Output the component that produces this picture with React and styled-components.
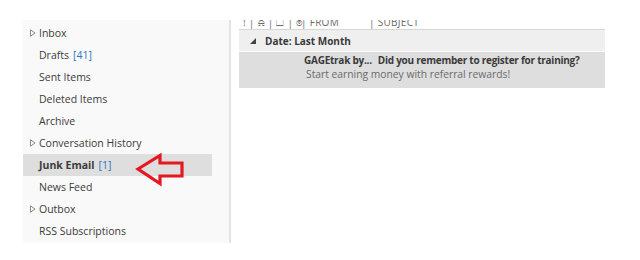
import React from 'react';
import styled, { createGlobalStyle } from 'styled-components';

const Global = createGlobalStyle`
  html, body {
    margin: 0;
    background: #ffffff;
  }
  body {
    font-family: 'Open Sans', 'Noto Sans', sans-serif;
    color: #333;
  }
`;

const Page = styled.div`
  position: relative;
  display: flex;
  align-items: flex-start;
  width: 640px;
  height: 260px;
  padding: 20px 0 0 23px;
  box-sizing: border-box;
  overflow: hidden;
`;

/* Folder pane */
const FolderPane = styled.div`
  width: 208px;
  padding: 2px 0 0;
  height: 223px;
  box-sizing: border-box;
  background: #f9f9f9;
  border-right: 2px solid #e4e4e4;
`;

const FolderRow = styled.div`
  display: flex;
  align-items: center;
  height: 22px;
  width: 189px;
  padding-left: 7px;
  box-sizing: border-box;
  font-size: 10.5px;
  font-weight: ${p => (p.$active ? 700 : 400)};
  color: #3b3b3b;
  background: ${p => (p.$active ? '#dedede' : 'transparent')};
`;

const Expander = styled.span`
  width: 9px;
  display: inline-flex;
  align-items: center;
`;

const Count = styled.span`
  color: #2f75c4;
  font-weight: 400;
  margin-left: 4px;
`;

/* Mail list */
const MailPane = styled.div`
  margin-left: 8px;
  width: 366px;
  display: flex;
  flex-direction: column;
`;

const ColumnHeader = styled.div`
  height: 9px;
  overflow: hidden;
  display: flex;
  align-items: flex-start;
  padding-left: 4px;
  font-size: 10px;
  line-height: 10px;
  color: #6a6a6a;
  border-bottom: 1px solid #d6d6d6;
`;

const HeaderCell = styled.span`
  width: ${p => p.$w || 'auto'};
  margin-top: -3px;
  white-space: nowrap;
  flex: none;
  letter-spacing: 0.3px;
`;

const GroupRow = styled.div`
  display: flex;
  align-items: center;
  height: 21px;
  padding-left: 11px;
  gap: 9px;
  background: #efefef;
  font-size: 10px;
  font-weight: 700;
  color: #3a3a3a;
  border-bottom: 1px solid #ffffff;
`;

const MailRow = styled.div`
  height: 36px;
  padding: 1px 0 0 64px;
  box-sizing: border-box;
  background: #dedede;
  line-height: 14px;
`;

const Line = styled.div`
  display: flex;
  gap: 6px;
  white-space: nowrap;
  color: ${p => (p.$muted ? '#6b6b6b' : '#3a3a3a')};
  font-weight: ${p => (p.$muted ? 400 : 700)};
  padding-left: ${p => (p.$muted ? 3 : 1)}px;
  font-size: ${p => (p.$muted ? '10.3px' : '10px')};
  letter-spacing: ${p => (p.$muted ? '0' : '-0.25px')};
`;

const ArrowMark = styled.svg`
  position: absolute;
  left: 135px;
  top: 153px;
`;

const folders = [
  { name: 'Inbox', expand: true },
  { name: 'Drafts', count: 41 },
  { name: 'Sent Items' },
  { name: 'Deleted Items' },
  { name: 'Archive' },
  { name: 'Conversation History', expand: true },
  { name: 'Junk Email', count: 1, active: true },
  { name: 'News Feed' },
  { name: 'Outbox', expand: true },
  { name: 'RSS Subscriptions' },
];

const Tri = () => (
  <svg width="6" height="8" viewBox="0 0 6 8">
    <path d="M0.5 0.8 L5 4 L0.5 7.2 Z" fill="none" stroke="#8a8a8a" strokeWidth="1" />
  </svg>
);

export default function App() {
  return (
    <>
      <Global />
      <Page>
        <FolderPane>
          {folders.map(f => (
            <FolderRow key={f.name} $active={f.active}>
              <Expander>{f.expand && <Tri />}</Expander>
              {f.name}
              {f.count != null && <Count>[{f.count}]</Count>}
            </FolderRow>
          ))}
        </FolderPane>
        <MailPane>
          <ColumnHeader>
            <HeaderCell $w="58px">! | ⍾ | ☐ | ⊚</HeaderCell>
            <HeaderCell $w="68px">| FROM</HeaderCell>
            <HeaderCell>| SUBJECT</HeaderCell>
          </ColumnHeader>
          <GroupRow>
            <svg width="6" height="6" viewBox="0 0 6 6">
              <path d="M6 0 L6 6 L0 6 Z" fill="#444" />
            </svg>
            Date: Last Month
          </GroupRow>
          <MailRow>
            <Line>
              <span>GAGEtrak by...</span>
              <span>Did you remember to register for training?</span>
            </Line>
            <Line $muted>Start earning money with referral rewards!</Line>
          </MailRow>
        </MailPane>
        <ArrowMark width="52" height="34" viewBox="0 0 52 34">
          <path
            d="M3 16 L25 2.5 L25 10 L47 10 L47 23 L25 23 L25 30.5 Z"
            fill="none"
            stroke="#e5171f"
            strokeWidth="3.2"
            strokeLinejoin="miter"
          />
        </ArrowMark>
      </Page>
    </>
  );
}
